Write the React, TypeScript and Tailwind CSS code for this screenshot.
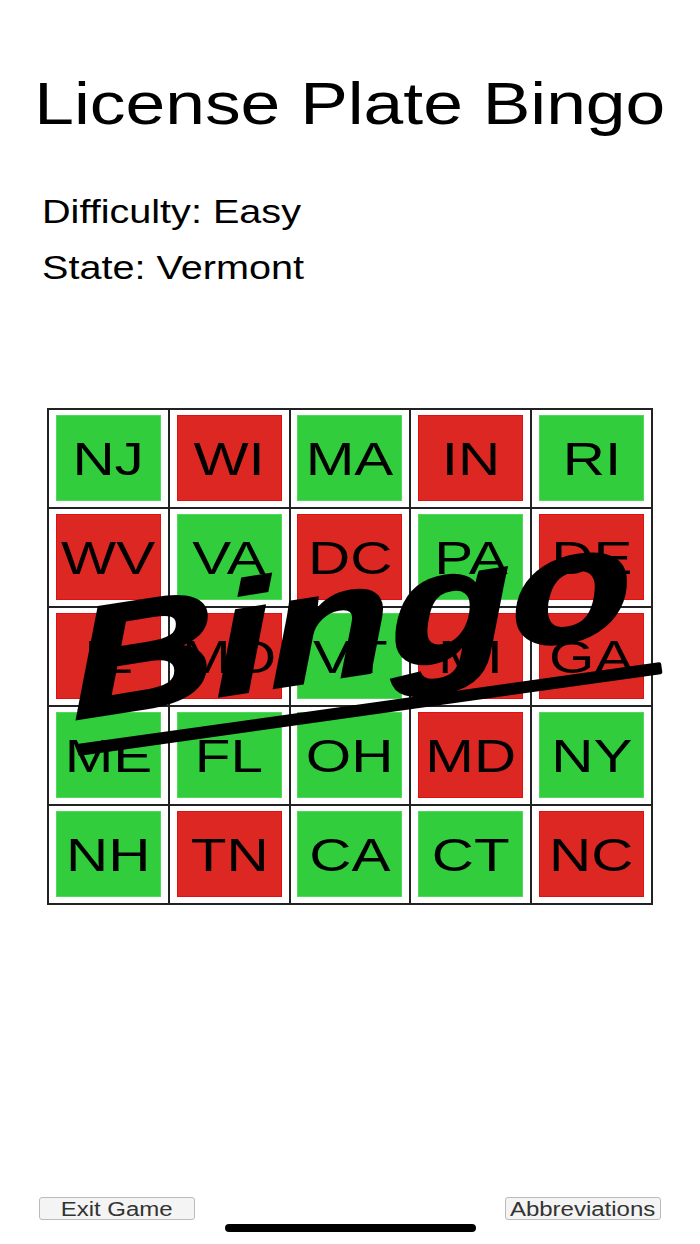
import React from "react";

const CELLS: [string, boolean][] = [
  ["NJ", true], ["WI", false], ["MA", true], ["IN", false], ["RI", true],
  ["WV", false], ["VA", true], ["DC", false], ["PA", true], ["DE", false],
  ["IL", false], ["MO", false], ["VT", true], ["MI", false], ["GA", false],
  ["ME", true], ["FL", true], ["OH", true], ["MD", false], ["NY", true],
  ["NH", true], ["TN", false], ["CA", true], ["CT", true], ["NC", false],
];

const App: React.FC = () => (
  <div className="relative w-[700px] h-[1244px] bg-white overflow-hidden font-['Liberation_Sans',Arial,sans-serif] text-black">
    {/* Title */}
    <div className="pt-[66px] h-[193px] flex justify-center">
      <h1 className="text-[59px] leading-[76px] whitespace-nowrap scale-x-[1.21] font-normal">License Plate Bingo</h1>
    </div>

    {/* Game info */}
    <div className="pl-[42px] flex flex-col gap-[18px] h-[215px]">
      <p className="text-[33px] leading-[38px] whitespace-nowrap origin-left scale-x-[1.2]">Difficulty: Easy</p>
      <p className="text-[33px] leading-[38px] whitespace-nowrap origin-left scale-x-[1.2]">State: Vermont</p>
    </div>

    {/* Board */}
    <div className="relative ml-[47px] w-[606px]">
      <div className="grid grid-cols-5 grid-rows-[repeat(5,99px)] border-l-2 border-t-2 border-[#222] h-[497px]">
        {CELLS.map(([abbr, found]) => (
          <div key={abbr} className="border-r-2 border-b-2 border-[#222] flex items-center justify-center bg-white pb-[2px]">
            <div
              className={`w-[105px] h-[86px] pt-[2px] flex items-center justify-center border ${
                found ? "bg-[#32cd3c] border-[#4fd958]" : "bg-[#dc2722] border-[#e01010]"
              }`}
            >
              <span className="text-[46px] leading-none whitespace-nowrap scale-x-[1.27]">{abbr}</span>
            </div>
          </div>
        ))}
      </div>

      {/* Bingo stamp */}
      <div className="absolute left-[13px] top-[92px] w-[590px] h-[210px] -rotate-[8deg] pointer-events-none">
        <div className="pt-[36px] pl-[6px] text-[155px] leading-[180px] font-bold italic whitespace-nowrap origin-left -rotate-[1deg] scale-x-[1.29] -skew-x-[5deg] [-webkit-text-stroke:3px_black]">
          Bingo
        </div>
        <div className="absolute left-0 right-0 bottom-[-6px] h-[12px] bg-black rounded-[2px]" />
      </div>
    </div>

    {/* Bottom buttons */}
    <button className="absolute left-[39px] top-[1197px] w-[156px] h-[23px] rounded-[3px] border border-[#bbb] bg-[#f4f4f4] text-[#333] text-[20px] leading-none flex items-center justify-center">
      <span className="scale-x-[1.2]">Exit Game</span>
    </button>
    <button className="absolute left-[505px] top-[1197px] w-[156px] h-[23px] rounded-[3px] border border-[#bbb] bg-[#f4f4f4] text-[#333] text-[20px] leading-none flex items-center justify-center">
      <span className="scale-x-[1.2]">Abbreviations</span>
    </button>

    {/* Home indicator */}
    <div className="absolute left-[225px] top-[1224px] w-[251px] h-[8px] rounded-full bg-black" />
  </div>
);

export default App;
